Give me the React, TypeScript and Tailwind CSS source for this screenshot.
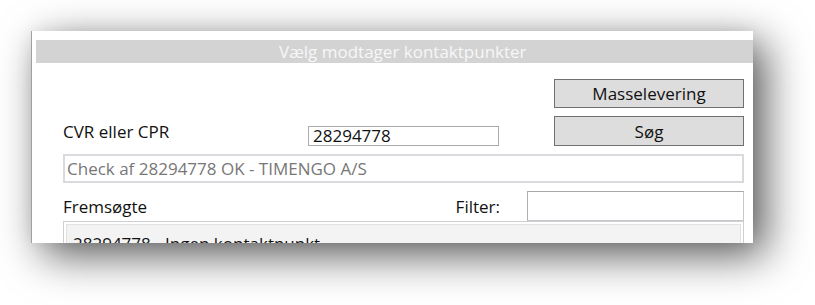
import React from "react";

export default function App() {
  return (
    <div
      className="w-[815px] h-[305px] bg-white pl-[31px] pt-[31px] overflow-hidden"
      style={{ fontFamily: '"Open Sans", "Noto Sans", sans-serif' }}
    >
      <div className="w-[722px] h-[212px] bg-white border-l border-[#a0a0a0] overflow-hidden shadow-[12px_12px_40px_rgba(0,0,0,0.66),0_0_16px_rgba(0,0,0,0.06)]">
        <div className="mt-[9px] ml-[4px] h-[23px] bg-[#d3d3d3] flex items-center pl-[243px] text-[17px] leading-none text-[#f7f7f7] whitespace-nowrap">
          Vælg modtager kontaktpunkter
        </div>
        <div className="pl-[31px] pr-[9px]">
          <div className="flex justify-end mt-[16px]">
            <button className="w-[190px] h-[29px] bg-[#dddddd] border border-[#707070] text-[17px] text-[#111] leading-none flex items-center justify-center">
              Masselevering
            </button>
          </div>
          <div className="flex items-center mt-[8px] h-[30px]">
            <div className="w-[245px] text-[17px] text-[#111] leading-none pt-[1px]">CVR eller CPR</div>
            <div className="w-[191px] h-[20px] mt-[9px] border border-[#ababab] bg-white flex items-center pl-[4px] text-[17px] leading-none text-[#111]">
              28294778
            </div>
            <div className="flex-1" />
            <button className="w-[190px] h-[30px] bg-[#dddddd] border border-[#707070] text-[17px] text-[#111] leading-none flex items-center justify-center">
              Søg
            </button>
          </div>
          <div className="mt-[8px] h-[29px] border-2 border-[#dadade] flex items-center pl-[2px] text-[17px] leading-none text-[#777]">
            Check af 28294778 OK - TIMENGO A/S
          </div>
          <div className="flex items-center mt-[8px] h-[30px]">
            <div className="flex-1 text-[17px] leading-none text-[#111]">Fremsøgte</div>
            <div className="text-[17px] leading-none text-[#111] mr-[27px]">Filter:</div>
            <div className="w-[217px] h-[30px] border border-[#c8c8cc] border-t-[#a8a8ac] border-l-[#b0b0b4] bg-white" />
          </div>
          <div className="h-[40px] border border-[#cfcfd3] bg-white p-[2px]">
            <div className="h-full border border-[#e2e2e2] bg-[#f3f3f3] pl-[6px] pt-[10px] text-[17px] text-[#111] leading-none whitespace-nowrap">
              28294778 - Ingen kontaktpunkt
            </div>
          </div>
        </div>
      </div>
    </div>
  );
}
